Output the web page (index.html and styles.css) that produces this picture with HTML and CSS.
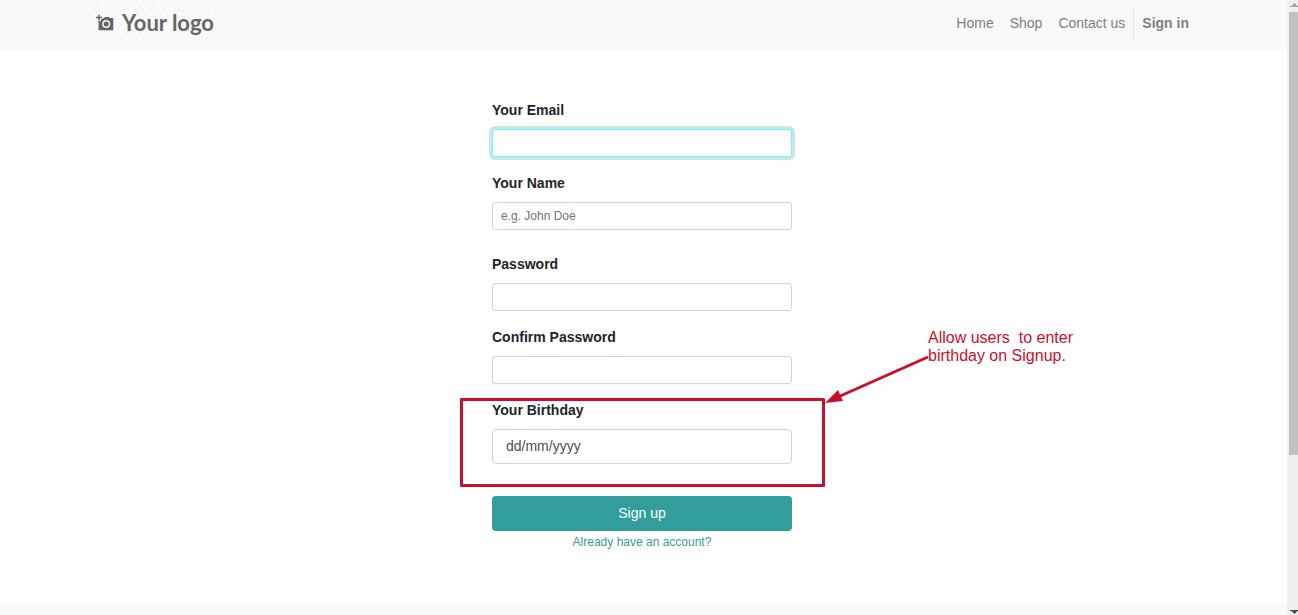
FILE: index.html
```html
<!DOCTYPE html>
<html lang="en">
<head>
<meta charset="utf-8">
<title>Sign up | Your logo</title>
<link rel="stylesheet" href="styles.css">
</head>
<body>
<div class="window">
  <div class="page">
    <header class="site-header">
      <div class="container">
        <a class="brand" href="#">
          <svg class="brand-icon" width="18" height="18" viewBox="0 0 18 18" aria-hidden="true">
            <path fill="#666" fill-rule="evenodd" d="M7 4h1l1-1h4l1 1h2.500a.800.800 0 0 1 .800.800V15.500a.800.800 0 0 1-.800.800H3.300a.800.800 0 0 1-.800-.800V7H5V5h2zM10.200 6a4 4 0 1 0 0 8 4 4 0 0 0 0-8zm0 1.500a2.500 2.500 0 1 1 0 5 2.500 2.500 0 0 1 0-5z"/>
            <path stroke="#666" stroke-width="1.400" d="M0 3.500h6M3 .500v6"/>
          </svg>
          <span>Your logo</span>
        </a>
        <nav class="menu">
          <a href="#">Home</a>
          <a href="#">Shop</a>
          <a href="#">Contact us</a>
          <a class="sign-in" href="#">Sign in</a>
        </nav>
      </div>
    </header>
    <main class="content">
      <form class="signup">
        <div class="field">
          <label for="email">Your Email</label>
          <input class="control active" id="email" type="email">
        </div>
        <div class="field spaced">
          <label for="name">Your Name</label>
          <input class="control" id="name" type="text" placeholder="e.g. John Doe">
        </div>
        <div class="field">
          <label for="password">Password</label>
          <input class="control" id="password" type="password">
        </div>
        <div class="field">
          <label for="confirm">Confirm Password</label>
          <input class="control" id="confirm" type="password">
        </div>
        <div class="field birthday">
          <label for="birthday">Your Birthday</label>
          <input class="control large" id="birthday" type="text" placeholder="dd/mm/yyyy">
          <div class="highlight"></div>
          <svg class="arrow" width="106" height="52" viewBox="0 0 106 52" aria-hidden="true">
            <path d="M104 4 14 44" stroke="#c8102e" stroke-width="3"/>
            <path d="M1 50 14 37l5 11z" fill="#c8102e"/>
          </svg>
          <p class="note">Allow users&nbsp; to enter<br>birthday on Signup.</p>
        </div>
        <button class="submit" type="submit">Sign up</button>
        <a class="login" href="#">Already have an account?</a>
      </form>
    </main>
    <footer class="site-footer"></footer>
  </div>
  <div class="scrollbar" aria-hidden="true">
    <svg class="scroll-up" width="9" height="12" viewBox="0 0 9 12"><path d="M1 7h8V6H8V5H7V4H6V3H5v1H4v1H3v1H1z" fill="#a3a3a3"/></svg>
    <div class="thumb"></div>
    <svg class="scroll-down" width="9" height="12" viewBox="0 0 9 12"><path d="M1 7h8v1H8v1H7v1H6v1H5v-1H4V9H3V8H1z" fill="#505050"/></svg>
  </div>
</div>
</body>
</html>
```
FILE: styles.css
```css
* {
  box-sizing: border-box;
}

body {
  margin: 0;
  background: #fff;
  color: #212529;
  font: 14px/21px "Liberation Sans", Arial, sans-serif;
}

a {
  text-decoration: none;
}

.window {
  display: grid;
  grid-template-columns: 1fr 11px;
  height: 100vh;
  overflow: hidden;
}

.page {
  display: flex;
  flex-direction: column;
}

.site-header {
  padding-right: 3px;
  background: #f9f9f9;
}

.container {
  display: flex;
  align-items: center;
  justify-content: space-between;
  max-width: 1140px;
  margin: 0 auto;
  padding: 4px 15px 8px;
}

.brand {
  display: flex;
  align-items: center;
  gap: 8px;
  height: 38px;
  padding: 0 10px 0 9px;
  background: repeating-linear-gradient(135deg, #f9f9f9 0 8px, #f5f5f5 8px 10px);
  color: #666;
  font: 700 22px/38px Lato, "Liberation Sans", sans-serif;
}

.brand-icon {
  flex: none;
}

.menu {
  display: flex;
}

.menu a {
  padding: 8px;
  color: #808080;
  line-height: 21px;
}

.menu .sign-in {
  border-left: 1px solid #e6e6e6;
  font-weight: 700;
}

.content {
  flex: 1;
  padding: 50px 3px 0 0;
}

.signup {
  display: flex;
  flex-direction: column;
  max-width: 300px;
  margin: 0 auto;
}

.field {
  display: flex;
  flex-direction: column;
  gap: 8px;
  margin-bottom: 16px;
}

.spaced {
  margin-bottom: 24px;
}

.field label {
  font-weight: 700;
}

.control {
  width: 100%;
  height: 28px;
  padding: 4px 8px;
  border: 1px solid #ced4da;
  border-radius: 3px;
  background: #fff;
  color: #495057;
  font: 12px/18px "Liberation Sans", Arial, sans-serif;
}

.control::placeholder {
  color: #6c757d;
  opacity: 1;
}

.control:focus,
.active {
  outline: none;
  border-color: #5effff;
  box-shadow: 0 0 0 3px #cbe6e5;
}

.large {
  height: 35px;
  padding: 5px 13px 7px;
  border-radius: 4px;
  font-size: 14px;
  line-height: 21px;
}

.large::placeholder {
  color: #495057;
}

.birthday {
  position: relative;
  margin-bottom: 32px;
}

.highlight {
  position: absolute;
  top: -2px;
  left: -32px;
  width: 365px;
  height: 89px;
  border: 3px solid #c8102e;
  border-radius: 1px;
  pointer-events: none;
}

.arrow {
  position: absolute;
  top: -47px;
  left: 332px;
}

.note {
  position: absolute;
  top: -71px;
  left: 436px;
  margin: 0;
  color: #c8102e;
  font-size: 16px;
  line-height: 18px;
  white-space: nowrap;
}

.submit {
  height: 35px;
  border: 0;
  border-radius: 4px;
  background: #329e9b;
  color: #fff;
  font: 14px/21px "Liberation Sans", Arial, sans-serif;
}

.login {
  padding-top: 2px;
  color: #329e9b;
  font-size: 12px;
  line-height: 18px;
  text-align: center;
}

.site-footer {
  height: 12px;
  background: #f9f9f9;
}

.scrollbar {
  display: flex;
  flex-direction: column;
  padding-left: 2px;
  background: #f0f0f0;
}

.thumb {
  height: 72%;
  background: #c1c1c1;
}

.scroll-down {
  margin-top: auto;
}
```
